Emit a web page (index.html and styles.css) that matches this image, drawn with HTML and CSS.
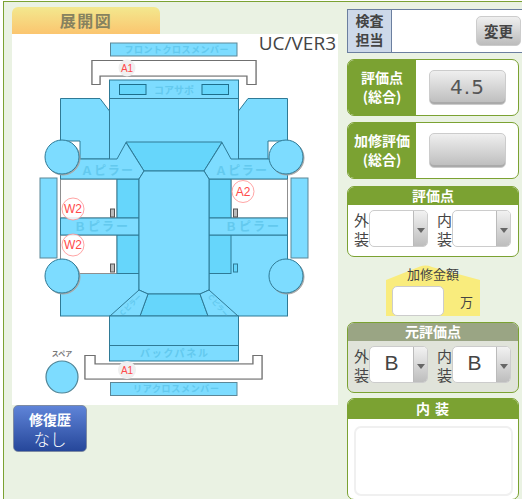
FILE: index.html
```html
<!DOCTYPE html>
<html lang="ja">
<head>
<meta charset="utf-8">
<title>展開図</title>
<link rel="stylesheet" href="styles.css">
</head>
<body>
<div class="frame">
  <div class="left">
    <div class="tab">展開図</div>
    <div class="sheet">
      <span class="ver">UC/VER3</span>
      <svg class="car" viewBox="12 34 326 371" width="326" height="371" xmlns="http://www.w3.org/2000/svg">
        <defs>
          <path id="fender" d="M60.5 98.5H100L109.5 111V159H80V141H60.5Z"/>
          <path id="apillar" d="M60.5 159H117L126 142.5L144 171L139 179H60.5Z"/>
          <path id="quarter" d="M110 316L139 290L148 294L140 316Z"/>
        </defs>
        <rect class="p edge" x="110.5" y="43" width="126.5" height="13"/>
        <text class="lbl t8" x="176.5" y="52.5" textLength="104">フロントクロスメンバー</text>
        <path class="br" d="M92 60.5H256V84.5H247V76H100V84.5H92Z"/>
        <circle class="halo" cx="127" cy="68" r="8.5"/>
        <text class="red t10" x="127" y="72">A1</text>

        <rect class="p" x="109.5" y="80" width="129" height="240"/>
        <path class="l" d="M109.5 98.5H238.5"/>
        <rect class="box" x="119.5" y="84.5" width="26.5" height="10"/>
        <rect class="box" x="202" y="84.5" width="26.5" height="10"/>
        <text class="lbl t10" x="174" y="94">コアサポ</text>

        <use class="p" href="#fender"/>
        <use class="p" href="#fender" transform="matrix(-1 0 0 1 348 0)"/>

        <rect class="p" x="60.5" y="235" width="78.5" height="81"/>
        <rect class="p" x="209" y="235" width="78.5" height="81"/>

        <rect class="p edge" x="40" y="178" width="17" height="80"/>
        <rect class="p edge" x="291" y="178" width="17" height="80"/>

        <rect class="win" x="60.5" y="179" width="56.5" height="39"/>
        <rect class="win" x="231" y="179" width="56.5" height="39"/>
        <rect class="win" x="60.5" y="235" width="56.5" height="38.5"/>
        <rect class="d" x="117" y="179" width="22" height="39"/>
        <rect class="d" x="209" y="179" width="22" height="39"/>
        <rect class="d" x="117" y="235" width="22" height="38.5"/>
        <rect class="d" x="209" y="235" width="22" height="38.5"/>
        <rect class="p" x="60.5" y="218" width="78.5" height="17"/>
        <rect class="p" x="209" y="218" width="78.5" height="17"/>
        <text class="lbl t11" x="101" y="231" textLength="54">Ｂピラー</text>
        <text class="lbl t11" x="252" y="231" textLength="54">Ｂピラー</text>

        <rect class="knob" x="110.5" y="209" width="4" height="8"/>
        <rect class="knob" x="233.5" y="209" width="4" height="8"/>
        <rect class="knob" x="110.5" y="264" width="4" height="8"/>
        <rect class="knobb" x="233.5" y="264" width="4" height="8"/>

        <path class="d" d="M126 142H222L204 171H144Z"/>
        <use class="p" href="#apillar"/>
        <use class="p" href="#apillar" transform="matrix(-1 0 0 1 348 0)"/>
        <text class="lbl t11" x="107" y="175" textLength="52">Ａピラー</text>
        <text class="lbl t11" x="241" y="175" textLength="52">Ａピラー</text>

        <path class="p" d="M144 171H204L209 179V290L200 294H148L139 290V179Z"/>
        <path class="d" d="M148 294H200L208 316H140Z"/>
        <use class="p" href="#quarter"/>
        <use class="p" href="#quarter" transform="matrix(-1 0 0 1 348 0)"/>
        <text class="lbl t6" x="132" y="307" transform="rotate(-44 132 307)">Ｃピラー</text>
        <text class="lbl t6" x="216" y="307" transform="rotate(50 216 307)">Ｃピラー</text>

        <rect class="p" x="109.5" y="316" width="129" height="45"/>
        <path class="l" d="M109.5 345.5H238.5"/>
        <text class="lbl t10" x="174" y="357" textLength="68">バックパネル</text>

        <circle class="wh" cx="62" cy="157" r="17"/>
        <circle class="wh" cx="286" cy="157" r="17"/>
        <circle class="wh" cx="62" cy="276" r="17"/>
        <circle class="wh" cx="286" cy="276" r="17"/>

        <path class="br" d="M85 355.5H95V364H253V355.5H262V379H85Z"/>
        <circle class="halo" cx="127" cy="370" r="9"/>
        <text class="red t10" x="127" y="374">A1</text>
        <rect class="p edge" x="110.5" y="382.5" width="126.5" height="13"/>
        <text class="lbl t8" x="176" y="392" textLength="86">リアクロスメンバー</text>

        <text class="spare" x="62" y="356">スペア</text>
        <circle class="wh2" cx="62" cy="377" r="16"/>

        <circle class="mark" cx="73" cy="209" r="11"/>
        <text class="red t11" x="73" y="213">W2</text>
        <circle class="mark" cx="73" cy="245" r="11"/>
        <text class="red t11" x="73" y="249">W2</text>
        <circle class="mark" cx="243" cy="191.5" r="11"/>
        <text class="red t11" x="243" y="195.5">A2</text>
      </svg>
    </div>
    <div class="history"><b>修復歴</b><span>なし</span></div>
  </div>

  <div class="right">
    <div class="staff">
      <div class="staff-label">検査<br>担当</div>
      <div class="staff-body"><div class="btn-change">変更</div></div>
    </div>

    <div class="score">
      <div class="score-head">評価点<br>(総合)</div>
      <div class="score-body"><div class="btn-score">4.5</div></div>
    </div>
    <div class="score">
      <div class="score-head">加修評価<br>(総合)</div>
      <div class="score-body"><div class="btn-score"></div></div>
    </div>

    <div class="panel">
      <div class="panel-head">評価点</div>
      <div class="pair">
        <span class="pair-label">外装</span>
        <div class="sel"><span class="sel-val"></span><span class="sel-arrow"></span></div>
        <span class="pair-label">内装</span>
        <div class="sel"><span class="sel-val"></span><span class="sel-arrow"></span></div>
      </div>
    </div>

    <div class="amount">
      <svg class="amount-bg" viewBox="0 0 94 51" width="94" height="51" preserveAspectRatio="none" xmlns="http://www.w3.org/2000/svg"><path d="M0 15L34 1.5Q40 -0.5 46 2L94 15V51H0Z"/></svg>
      <div class="amount-title">加修金額</div>
      <div class="amount-row"><div class="amount-input"></div><span class="amount-unit">万</span></div>
    </div>

    <div class="panel panel-old">
      <div class="panel-head">元評価点</div>
      <div class="pair">
        <span class="pair-label">外装</span>
        <div class="sel"><span class="sel-val">B</span><span class="sel-arrow"></span></div>
        <span class="pair-label">内装</span>
        <div class="sel"><span class="sel-val">B</span><span class="sel-arrow"></span></div>
      </div>
    </div>

    <div class="panel panel-note">
      <div class="panel-head panel-head-wide">内 装</div>
      <div class="note"></div>
    </div>
  </div>
</div>
</body>
</html>
```

FILE: styles.css
```css
* { box-sizing: border-box; }
html, body { margin: 0; padding: 0; height: 499px; overflow: hidden; background: #fff; }
body { font-family: "Noto Sans CJK JP", "Liberation Sans", sans-serif; color: #444; }

.frame {
  margin: 1px 0 0 3px;
  width: 530px;
  height: 510px;
  background: #eaf2e3;
  border-top: 1px solid #7ba232;
  border-left: 1px solid #7ba232;
  display: flex;
  padding: 5px 0 0 8px;
}
.left { width: 326px; flex: none; }
.tab {
  width: 148px;
  height: 27px;
  border-radius: 6px 6px 0 0;
  background: linear-gradient(#f3e88e, #fbc56f);
  color: #86825f;
  font-size: 16px;
  font-weight: 700;
  line-height: 27px;
  text-align: center;
  letter-spacing: 1.5px;
}
.sheet { position: relative; width: 326px; height: 371px; background: #fff; }
.car { display: block; }
.ver {
  position: absolute;
  right: 2px;
  top: -2px;
  font: 19px/22px "Open Sans", sans-serif;
  color: #444;
}

.p { fill: #7ddcff; stroke: #2f7a96; stroke-width: 1; }
.edge { stroke: #5c8797; }
.d { fill: #66d6fb; stroke: #2f7a96; stroke-width: 1; }
.l { fill: none; stroke: #2f7a96; stroke-width: 1; }
.box { fill: #66d6fb; stroke: #1d6f8c; stroke-width: 1; }
.win { fill: #fff; stroke: #8f8f8f; stroke-width: 1; }
.br { fill: #fff; stroke: #707070; stroke-width: 1.2; filter: drop-shadow(0 0 .6px #aaa); }
.halo { fill: #f0f0f0; }
.knob { fill: #bbb; stroke: #555; stroke-width: 1; }
.knobb { fill: #66d6fb; stroke: #2f7a96; stroke-width: 1; }
.wh { fill: #7ddcff; stroke: #2f7a96; stroke-width: 1; filter: drop-shadow(1px 1px 0 #a8a8a8); }
.wh2 { fill: #7ddcff; stroke: #4f8496; stroke-width: 1.2; }
.mark { fill: #fff; fill-opacity: .85; stroke: #ff8d8d; stroke-width: .8; }
text { text-anchor: middle; font-family: "Noto Sans CJK JP", "Liberation Sans", sans-serif; }
.lbl { fill: #63c9ee; font-weight: 700; }
.t6 { font-size: 7px; }
.t8 { font-size: 9px; }
.t10 { font-size: 10px; }
.t11 { font-size: 12px; }
.red { fill: #ff4a4a; font-family: "Liberation Sans", sans-serif; }
.red.t10 { font-size: 10px; }
.red.t11 { font-size: 12px; }
.spare { fill: #777; font-size: 7px; font-weight: 700; }

.history {
  width: 74px;
  height: 47px;
  margin-left: 1px;
  border: 1px solid #7d8ba3;
  border-radius: 5px;
  background: linear-gradient(#5f84d8, #26479a);
  color: #fff;
  display: flex;
  flex-direction: column;
  align-items: center;
  justify-content: center;
  line-height: 20px;
}
.history b { font-size: 14px; }
.history span { font-size: 16.5px; font-weight: 300; }

.right { width: 178px; flex: none; margin-left: 9px; padding-top: 2px; }

.staff {
  display: flex;
  height: 44px;
  border: 1px solid #6b7f9f;
  background: #fff;
}
.staff-label {
  width: 44px;
  background: #cdd9e9;
  border-right: 1px solid #6b7f9f;
  font-size: 14px;
  font-weight: 700;
  line-height: 19px;
  text-align: center;
  padding-top: 1px;
  color: #444;
}
.staff-body { flex: 1; padding: 6px 0 0 84px; }
.btn-change {
  width: 45px;
  height: 30px;
  border: 1px solid #ccc;
  border-radius: 5px;
  background: linear-gradient(#efefef, #bcbcbc);
  font-size: 14.5px;
  font-weight: 700;
  line-height: 28px;
  text-align: center;
  color: #444;
}

.score {
  display: flex;
  width: 172px;
  height: 57px;
  margin-top: 6px;
  border: 1px solid #7ba232;
  border-radius: 7px;
  background: #fff;
  overflow: hidden;
}
.score:first-of-type { margin-top: 7px; }
.score-head {
  width: 68px;
  flex: none;
  background: #7ba232;
  color: #fff;
  font-size: 14px;
  font-weight: 700;
  line-height: 19px;
  text-align: center;
  padding-top: 8px;
  white-space: nowrap;
}
.score-body { flex: 1; padding: 10px 0 0 13px; }
.btn-score {
  width: 77px;
  height: 35px;
  border: 1px solid #ccc;
  border-radius: 5px;
  background: linear-gradient(#efefef, #bcbcbc);
  box-shadow: inset 0 -2px 0 #aaa;
  font: 20px/32px "DejaVu Sans", sans-serif;
  text-align: center;
  color: #555;
  letter-spacing: 1px;
}

.panel {
  width: 172px;
  margin-top: 7px;
  border: 1px solid #7ba232;
  border-radius: 7px;
  background: #fff;
  overflow: hidden;
  height: 71px;
}
.panel-head {
  height: 19px;
  margin: -1px -1px 0;
  background: #7ba232;
  color: #fff;
  font-size: 14px;
  font-weight: 700;
  line-height: 19px;
  text-align: center;
}
.pair {
  display: flex;
  align-items: flex-start;
  padding: 5px 0 0 6px;
}
.pair-label {
  width: 15px;
  flex: none;
  font-size: 15px;
  line-height: 19px;
  color: #444;
  word-break: break-all;
}
.sel {
  display: flex;
  width: 59px;
  height: 37px;
  margin-right: 9px;
  border: 1px solid #ccc;
  border-radius: 5px;
  background: #fff;
  overflow: hidden;
  flex: none;
}
.sel-val {
  flex: 1;
  font: 21px/31px "Liberation Sans", sans-serif;
  text-align: center;
  color: #444;
}
.sel-arrow {
  width: 14px;
  border-left: 1px solid #bbb;
  background: linear-gradient(#f2f2f2, #bdbdbd);
  position: relative;
}
.sel-arrow::after {
  content: "";
  position: absolute;
  left: 3px;
  top: 17px;
  border: 4px solid transparent;
  border-top: 5px solid #666;
  border-bottom: 0;
}

.amount {
  position: relative;
  width: 94px;
  height: 51px;
  margin: 8px 0 0 39px;
}
.amount-bg { position: absolute; left: 0; top: 0; display: block; overflow: visible; }
.amount-bg path { fill: #f9ec7d; }
.amount-title {
  position: relative;
  font-size: 13px;
  line-height: 18px;
  text-align: center;
  color: #444;
}
.amount-row { position: relative; display: flex; align-items: center; padding: 3px 0 0 6px; }
.amount-input {
  width: 52px;
  height: 30px;
  border: 1px solid #ccc;
  border-radius: 5px;
  background: #fff;
}
.amount-unit { font-size: 13px; margin-left: 16px; color: #444; }

.panel-old { margin-top: 6px; background: #e0e3da; }
.panel-old .panel-head { background: #9aa584; }

.panel-note { margin-top: 5px; height: 102px; border-bottom: 1px solid #7ba232; }
.panel-head-wide { height: 21px; line-height: 21px; letter-spacing: 1px; }
.note {
  width: 159px;
  height: 70px;
  margin: 7px 0 0 6px;
  border: 2px solid #f0f0f0;
  border-radius: 7px;
  background: #fff;
}
```
